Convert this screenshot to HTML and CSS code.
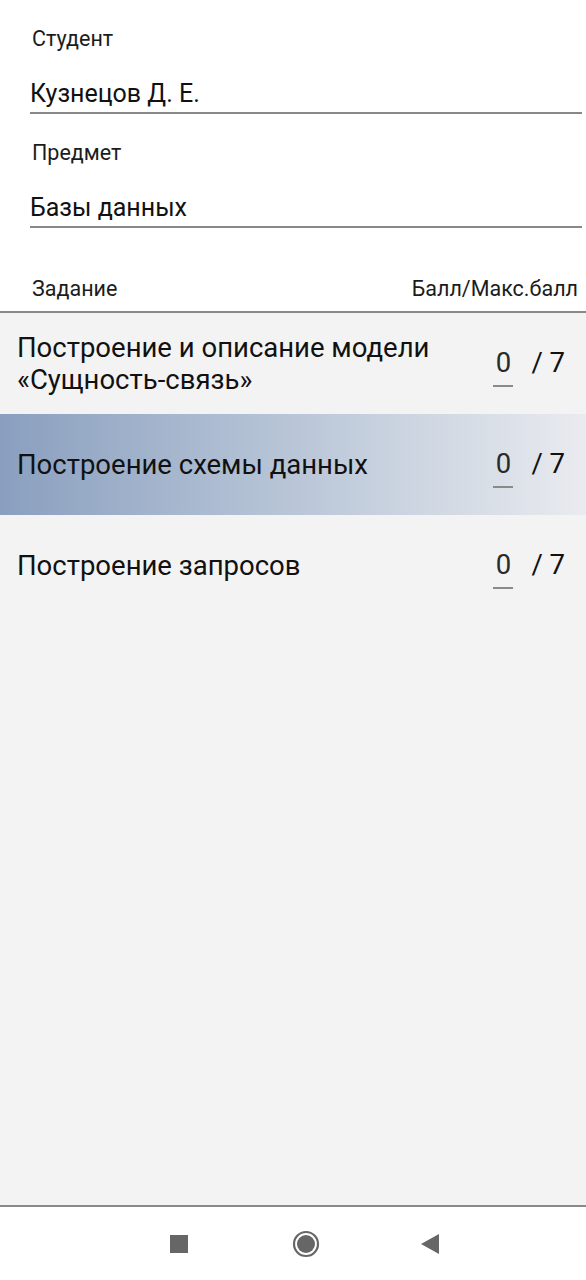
FILE: index.html
```html
<!DOCTYPE html>
<html lang="ru">
<head>
<meta charset="utf-8">
<link rel="stylesheet" href="styles.css">
</head>
<body>
<div class="app">
  <section class="form">
    <div class="group">
      <div class="label">Студент</div>
      <div class="field">Кузнецов Д. Е.</div>
    </div>
    <div class="group">
      <div class="label">Предмет</div>
      <div class="field">Базы данных</div>
    </div>
    <div class="head">
      <span>Задание</span>
      <span>Балл/Макс.балл</span>
    </div>
  </section>
  <section class="list">
    <div class="row">
      <div class="task">Построение и описание модели «Сущность-связь»</div>
      <div class="score"><span class="got">0</span><span class="max">/ 7</span></div>
    </div>
    <div class="row active">
      <div class="task">Построение схемы данных</div>
      <div class="score"><span class="got">0</span><span class="max">/ 7</span></div>
    </div>
    <div class="row">
      <div class="task">Построение запросов</div>
      <div class="score"><span class="got">0</span><span class="max">/ 7</span></div>
    </div>
  </section>
  <nav class="navbar">
    <svg class="nav-ico" width="18" height="18" viewBox="0 0 18 18"><rect x="0" y="0" width="18" height="18" fill="#666"/></svg>
    <svg class="nav-ico" width="28" height="28" viewBox="0 0 28 28"><circle cx="14" cy="14" r="12" fill="none" stroke="#666" stroke-width="2.2"/><circle cx="14" cy="14" r="9" fill="#666"/></svg>
    <svg class="nav-ico" width="20" height="22" viewBox="0 0 20 22"><polygon points="19,1 19,21 1,11" fill="#666"/></svg>
  </nav>
</div>
</body>
</html>
```
FILE: styles.css
```css
* { box-sizing: border-box; }
html, body { margin: 0; padding: 0; }
body {
  font-family: Roboto, "Noto Sans", sans-serif;
  color: #111;
  background: #f3f3f3;
}
.app {
  width: 586px;
  height: 1280px;
  display: flex;
  flex-direction: column;
}
.form {
  background: #fff;
}
.group {
  height: 114px;
}
.label {
  padding: 27px 0 0 32px;
  font-size: 21.5px;
  line-height: 24px;
  color: #1c1c1c;
}
.field {
  margin: 29px 4px 0 30px;
  font-size: 25px;
  line-height: 28px;
  padding-bottom: 4px;
  border-bottom: 2px solid #888;
  color: #111;
}
.head {
  display: flex;
  justify-content: space-between;
  padding: 49px 8px 10px 32px;
  font-size: 21.5px;
  line-height: 24px;
  color: #1c1c1c;
  border-bottom: 2px solid #888;
}
.list {
  flex: 1;
  display: flex;
  flex-direction: column;
}
.row {
  height: 101px;
  display: flex;
  align-items: center;
  justify-content: space-between;
  padding: 0 21px 0 17px;
}
.row.active {
  background: linear-gradient(to right, #8a9fbf 0%, #b4c2d5 45%, #e9ebef 100%);
}
.task {
  font-size: 27.5px;
  line-height: 32px;
  color: #111;
  max-width: 450px;
}
.score {
  display: flex;
  align-items: center;
  font-size: 27.5px;
  line-height: 32px;
}
.got {
  display: inline-block;
  width: 20px;
  text-align: center;
  padding: 7px 0 6px;
  border-bottom: 2px solid #8a8a8a;
  color: #2a2a2a;
  margin-right: 18px;
}
.max {
  color: #111;
  margin-top: -1px;
}
.navbar {
  height: 75px;
  flex: none;
  background: #fff;
  border-top: 2px solid #8a8a8a;
  display: flex;
  align-items: center;
  padding-left: 170px;
}
.nav-ico { display: block; flex: none; }
.nav-ico:nth-child(1) { margin-right: 104px; }
.nav-ico:nth-child(2) { margin-right: 100px; }
```
